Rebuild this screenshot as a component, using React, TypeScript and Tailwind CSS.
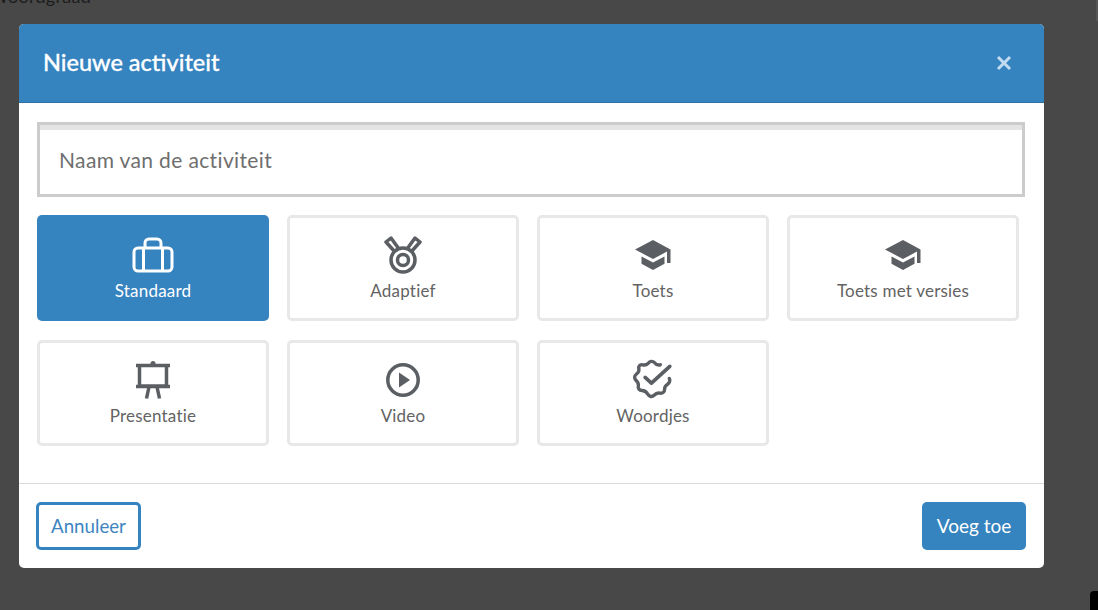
import type { ReactNode } from 'react'

const CapIcon = () => (
  <svg width="38" height="32" viewBox="0 0 38 32" fill="currentColor">
    <path d="M19 1 1 10.5 19 20l14-7.4V24h3.5V10.5z" />
    <path d="M7.5 17.5v7.2L19 31l11.5-6.3v-7.2L19 23.6z" />
  </svg>
)

const BagIcon = () => (
  <svg width="42" height="36" viewBox="0 0 42 36" fill="none" stroke="currentColor" strokeWidth="3">
    <rect x="2" y="11" width="38" height="23" rx="4" />
    <path d="M13 11V6a4 4 0 0 1 4-4h8a4 4 0 0 1 4 4v5M11.5 11v23M30.500 11v23" />
  </svg>
)

const MedalIcon = () => (
  <svg width="40" height="38" viewBox="0 0 40 38" fill="none" stroke="currentColor" strokeWidth="3.500">
    <path d="M12 16 3 6l5-4 8 11M28 16l9-10-5-4-8 11" strokeLinejoin="round" />
    <circle cx="20" cy="24" r="12" />
    <circle cx="20" cy="24" r="5.500" />
  </svg>
)

const BoardIcon = () => (
  <svg width="36" height="38" viewBox="0 0 36 38" fill="none" stroke="currentColor">
    <path d="M1 4.500h34" strokeWidth="3.500" />
    <path d="M4.500 4v21h27V4M1 25.500h34" strokeWidth="3.500" />
    <path d="M14 26 11.500 37.500M22 26 24.500 37.500" strokeWidth="3.500" />
    <circle cx="18" cy="2.500" r="2.500" fill="currentColor" stroke="none" />
  </svg>
)

const PlayIcon = () => (
  <svg width="34" height="34" viewBox="0 0 34 34" fill="none" stroke="currentColor" strokeWidth="3.500">
    <circle cx="17" cy="17" r="15.200" />
    <path d="M13 9.500 24 17l-11 7.500z" fill="currentColor" stroke="none" />
  </svg>
)

const BadgeIcon = () => (
  <svg width="42" height="42" viewBox="0 0 40 40" fill="none" stroke="currentColor" strokeWidth="3.200" strokeLinecap="round" strokeLinejoin="round">
    <path d="M27 5.500C25 6 23 5.500 21.500 3.500 19.500 1.500 17 2 15.500 4 14 5.500 12 6 10 5.500 7.500 5 6 7 6.500 9.500 7 11.500 6 13 4 14.500 2 16 2 18.500 4 20.500 5.500 22 6.500 23.500 6 25.500 5.500 28 7 30 9.500 30 12 30 13.500 31 15 33.500 16.500 36 19 36.500 21 34.500 22.500 33 24.500 32 26.500 32.500 29 33 31 31.500 31 29 31 27 32 25 34 24 36 22.500 36.500 20 35.500 18.500" />
    <path d="M12.500 17.500 18.500 23 36 7" strokeWidth="3.500" />
  </svg>
)

const activities: { label: string; icon: ReactNode; active?: boolean }[] = [
  { label: 'Standaard', icon: <BagIcon />, active: true },
  { label: 'Adaptief', icon: <MedalIcon /> },
  { label: 'Toets', icon: <CapIcon /> },
  { label: 'Toets met versies', icon: <CapIcon /> },
  { label: 'Presentatie', icon: <BoardIcon /> },
  { label: 'Video', icon: <PlayIcon /> },
  { label: 'Woordjes', icon: <BadgeIcon /> },
]

export default function App() {
  return (
    <div className="relative h-[610px] w-[1098px] overflow-hidden bg-[#484848] pl-[19px] pt-[24px] font-['Lato',sans-serif]">
      {/* Page behind the overlay, only its last bits show */}
      <div className="absolute left-[-10px] top-[-17px] text-[18px] tracking-[0.3px] text-[#1c1c1c]">Woordgraad</div>
      <div className="absolute right-0 top-0 h-[21px] w-[2px] bg-[#565656]"></div>
      <div className="absolute right-0 top-[591px] h-[19px] w-[8px] rounded-tl-[4px] bg-black"></div>

      <div className="relative flex h-[544px] w-[1025px] flex-col overflow-hidden rounded-[5px] bg-white">
        <div className="flex h-[79px] items-center justify-between border-b border-[#2d70a6] bg-[#3583bf] pl-[24px] pr-[32px]">
          <h2 className="text-[23.500px] font-medium text-white [-webkit-text-stroke:0.3px_white]">Nieuwe activiteit</h2>
          <svg width="16" height="16" viewBox="0 0 16 16" stroke="#c3dcef" strokeWidth="3" fill="none">
            <path d="M2 2l12 12M14 2 2 14" />
          </svg>
        </div>

        <div className="flex-1 pl-[18px] pr-[19px] pt-[19px]">
          <div className="flex h-[75px] items-center border-[3px] border-[#cccccc] pl-[19px] shadow-[inset_0_5px_0_#e4e4e4]">
            <span className="text-[21px] tracking-[0.36px] text-[#6e6e6e]">Naam van de activiteit</span>
          </div>

          <div className="mt-[18px] grid w-[982px] grid-cols-[232px_232px_232px_232px] gap-x-[18px] gap-y-[19px]">
            {activities.map((a) => (
              <div
                key={a.label}
                className={
                  a.active
                    ? 'flex h-[106px] flex-col items-center rounded-[5px] border-[3px] border-[#3583bf] bg-[#3583bf] pt-[11px] text-white'
                    : 'flex h-[106px] flex-col items-center rounded-[5px] border-[3px] border-[#e8e8e8] pt-[11px] text-[#5b5e62]'
                }
              >
                <div className="flex h-[52px] items-center">{a.icon}</div>
                <div className={a.active ? 'text-[17px] leading-[20px] tracking-[0.2px] text-white' : 'text-[17px] leading-[20px] tracking-[0.2px] text-[#636363]'}>{a.label}</div>
              </div>
            ))}
          </div>
        </div>

        <div className="flex h-[85px] items-center justify-between border-t border-[#d9d9d9] pl-[17px] pr-[18px]">
          <button className="h-[48px] w-[105px] rounded-[5px] border-[3px] border-[#3583bf] pt-[1px] text-[18.700px] text-[#3e84c2]">Annuleer</button>
          <button className="h-[48px] w-[104px] rounded-[5px] bg-[#3583bf] pt-[1px] text-[19px] text-white">Voeg toe</button>
        </div>
      </div>
    </div>
  )
}
